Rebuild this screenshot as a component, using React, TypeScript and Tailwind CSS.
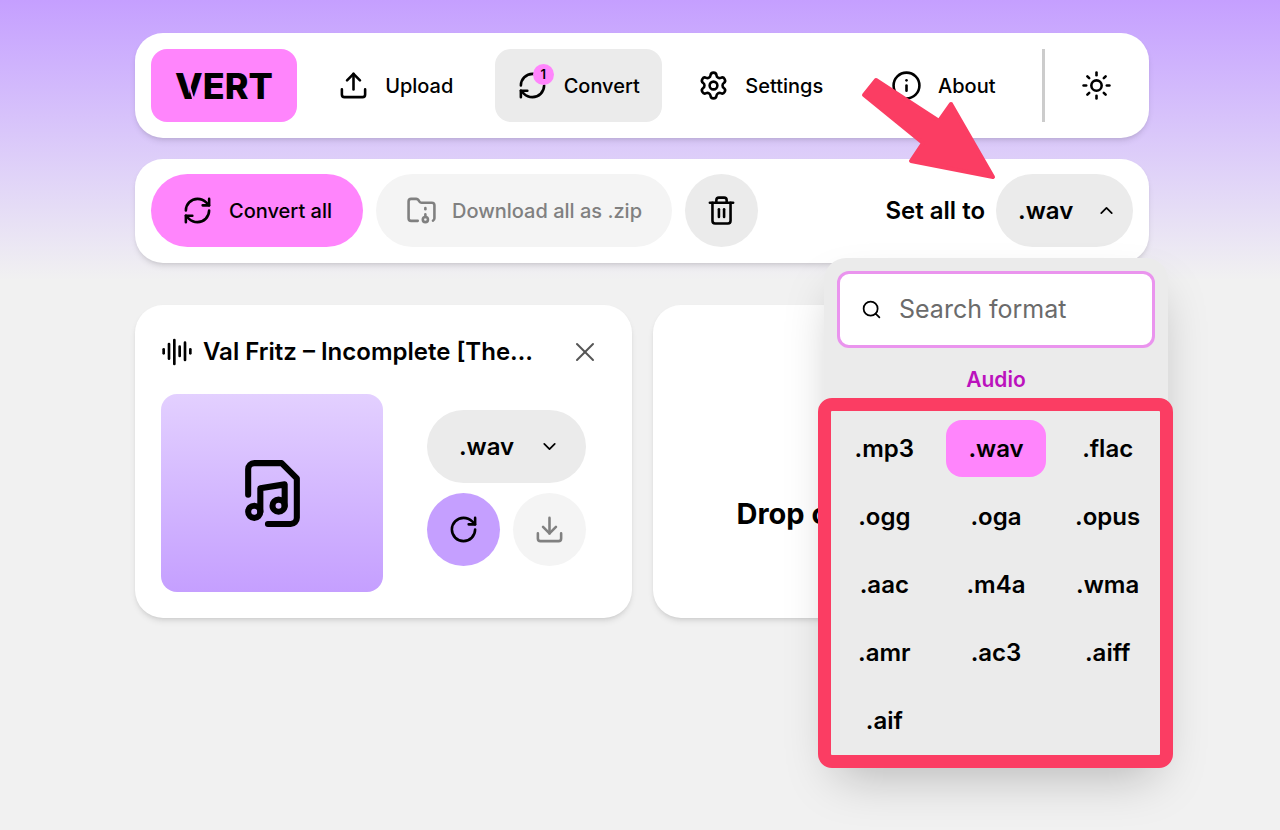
import { useState } from "react";
import {
  AudioLines,
  ChevronDown,
  ChevronUp,
  Download,
  FolderArchive,
  Info,
  RefreshCw,
  RotateCw,
  Search,
  Settings,
  Sun,
  Trash2,
  Upload,
  X,
} from "lucide-react";
import clsx from "clsx";

const FORMATS = [
  ".mp3",
  ".wav",
  ".flac",
  ".ogg",
  ".oga",
  ".opus",
  ".aac",
  ".m4a",
  ".wma",
  ".amr",
  ".ac3",
  ".aiff",
  ".aif",
];

const NAV = [
  { label: "Upload", href: "#upload", icon: Upload },
  { label: "Convert", href: "#convert", icon: RefreshCw, badge: 1 },
  { label: "Settings", href: "#settings", icon: Settings },
  { label: "About", href: "#about", icon: Info },
];

export default function App() {
  const [format, setFormat] = useState(".wav");

  return (
    <main className="min-h-screen bg-[#f1f1f1] bg-linear-to-b from-[#c59fff] to-[#f1f1f1] to-[280px] pt-[33px] pl-1 font-['Inter',sans-serif] font-medium text-black">
      <div className="mx-auto max-w-[1014px]">
        <Navbar />
        <Toolbar format={format} onChange={setFormat} />
        <div className="mt-[42px] grid grid-cols-2 gap-[21px]">
          <FileCard format={format} />
          <DropCard />
        </div>
      </div>
    </main>
  );
}

function Navbar() {
  return (
    <nav className="flex gap-[15px] rounded-[28px] bg-white p-4 shadow-md">
      <a
        href="#home"
        aria-label="VERT"
        className="relative grid h-[73px] w-[146px] place-items-center rounded-2xl bg-[#ff85fc]"
      >
        <span className="text-[36px] leading-none font-extrabold">VERT</span>
        <svg className="absolute inset-0 size-full" viewBox="0 0 146 73" fill="none" aria-hidden="true">
          <path d="M34 22 42.5 51" stroke="#ff85fc" strokeWidth="2" />
          <path d="M42.5 47 45 51H40Z" fill="#ff85fc" />
        </svg>
      </a>
      {NAV.map(({ label, href, icon: Icon, badge }) => (
        <a
          key={label}
          href={href}
          className={clsx(
            "flex flex-1 items-center justify-center gap-4 rounded-2xl text-[20px]",
            badge && "bg-[#ebebeb]"
          )}
        >
          <span className="relative">
            <Icon className="size-[31px]" />
            {badge && (
              <span className="absolute -top-1.5 -right-1.5 grid size-[21px] place-items-center rounded-full bg-[#ff85fc] text-[13px] leading-none font-semibold">
                {badge}
              </span>
            )}
          </span>
          {label}
        </a>
      ))}
      <div className="w-[3px] bg-[#cccccc]" />
      <button aria-label="Toggle theme" className="grid w-[73px] place-items-center">
        <Sun className="size-[31px]" />
      </button>
    </nav>
  );
}

function Toolbar({ format, onChange }: { format: string; onChange: (f: string) => void }) {
  return (
    <div className="mt-[21px] flex items-center rounded-[28px] bg-white px-4 pt-[15px] pb-4 text-[20px] shadow-md">
      <div className="flex gap-[13px]">
        <button className="flex h-[73px] items-center gap-4 rounded-full bg-[#ff85fc] px-[31px]">
          <RefreshCw className="size-[31px]" />
          Convert all
        </button>
        <button
          disabled
          className="flex h-[73px] items-center gap-[15px] rounded-full bg-[#f4f4f4] px-[30px] text-[#808080]"
        >
          <FolderArchive className="size-[31px]" />
          Download all as .zip
        </button>
        <button aria-label="Remove all" className="grid size-[73px] place-items-center rounded-full bg-[#ebebeb]">
          <Trash2 className="size-[31px]" />
        </button>
      </div>

      <span className="ml-auto text-[24px] font-semibold">Set all to</span>
      <div className="relative ml-[11px]">
        <button
          aria-haspopup="listbox"
          aria-expanded="true"
          className="flex h-[73px] w-[137px] items-center justify-between rounded-full bg-[#ebebeb] pr-4 pl-[22px] text-[24px] font-semibold"
        >
          {format}
          <ChevronUp className="size-[21px]" />
        </button>
        <Pointer />
        <FormatMenu format={format} onChange={onChange} />
      </div>
    </div>
  );
}

function FormatMenu({ format, onChange }: { format: string; onChange: (f: string) => void }) {
  return (
    <div className="absolute top-[84px] -right-[35px] z-10 w-[344px] rounded-[22px] bg-[#ebebeb] px-2.5 pt-[13px] pb-[13px] shadow-2xl">
      <div className="mx-[3px] flex h-[77px] items-center gap-[17px] rounded-xl border-3 border-[#ea94ee] bg-white pr-4 pl-[21px]">
        <Search className="size-[21px] shrink-0" />
        <input
          type="text"
          aria-label="Search format"
          placeholder="Search format"
          className="w-full min-w-0 text-[25px] font-normal outline-none placeholder:text-[#6b6b6b]"
        />
      </div>
      <div className="mt-4 text-center text-[21px] leading-8 font-semibold text-[#bb12bd]">Audio</div>
      <div className="relative mt-6">
        <div role="listbox" aria-label="Audio formats" className="grid grid-cols-3 gap-[11px]">
          {FORMATS.map((f) => (
            <button
              key={f}
              role="option"
              aria-selected={f === format}
              onClick={() => onChange(f)}
              className={clsx("h-[57px] rounded-2xl text-[24px] font-semibold", f === format && "bg-[#ff85fc]")}
            >
              {f}
            </button>
          ))}
        </div>
        {/* highlight frame */}
        <div className="pointer-events-none absolute -top-[22px] -right-[15px] -bottom-[19px] -left-4 rounded-[14px] border-13 border-[#fb3d63]" />
      </div>
    </div>
  );
}

function Pointer() {
  return (
    <svg
      className="pointer-events-none absolute right-full bottom-[67px] h-[104px] w-[136px]"
      viewBox="0 0 136 104"
      fill="#fb3d63"
      stroke="#fb3d63"
      strokeWidth="4"
      strokeLinejoin="round"
      aria-hidden="true"
    >
      <path d="M4 19 16 4 79 45 91 28 133 101 51 85 63 67Z" />
    </svg>
  );
}

function FileCard({ format }: { format: string }) {
  return (
    <section className="rounded-[28px] bg-white p-[26px] shadow-md">
      <div className="flex h-[42px] items-center">
        <AudioLines className="size-8 shrink-0" />
        <h2 className="ml-2.5 text-[24px] font-semibold whitespace-nowrap">Val Fritz – Incomplete [The…</h2>
        <button aria-label="Remove file" className="mr-[5px] ml-auto text-[#555555]">
          <X className="size-8" strokeWidth={1.5} />
        </button>
      </div>
      <div className="mt-[21px] grid grid-cols-2">
        <div className="grid h-[198px] place-items-center rounded-2xl bg-linear-to-b from-[#e3d0ff] to-[#c59fff]">
          <MusicFileIcon />
        </div>
        <div className="flex flex-col items-center justify-center gap-2.5 pb-2.5 pl-6">
          <button
            aria-haspopup="listbox"
            className="flex h-[73px] w-[159px] items-center justify-between rounded-full bg-[#ebebeb] pr-[26px] pl-8 text-[24px] font-semibold"
          >
            {format}
            <ChevronDown className="size-[21px]" />
          </button>
          <div className="flex w-[159px] justify-between">
            <button aria-label="Convert" className="grid size-[73px] place-items-center rounded-full bg-[#c59fff]">
              <RotateCw className="size-[31px]" />
            </button>
            <button
              aria-label="Download"
              disabled
              className="grid size-[73px] place-items-center rounded-full bg-[#f4f4f4] text-[#808080]"
            >
              <Download className="size-[31px]" />
            </button>
          </div>
        </div>
      </div>
    </section>
  );
}

function DropCard() {
  return (
    <button className="flex flex-col items-start justify-center rounded-[28px] bg-white pt-[104px] pl-[84px] text-[29px] leading-10 font-bold shadow-md">
      Drop o
    </button>
  );
}

function MusicFileIcon() {
  return (
    <svg
      className="size-[73px]"
      viewBox="0 0 24 24"
      fill="none"
      stroke="currentColor"
      strokeWidth="2"
      strokeLinecap="round"
      strokeLinejoin="round"
      aria-hidden="true"
    >
      <circle cx="14" cy="16" r="2" />
      <circle cx="6" cy="18" r="2" />
      <path d="M4 12.4V4a2 2 0 0 1 2-2h9l5 5v13a2 2 0 0 1-2 2h-7.5" />
      <path d="M8 18v-7.7L16 9v7" />
    </svg>
  );
}
